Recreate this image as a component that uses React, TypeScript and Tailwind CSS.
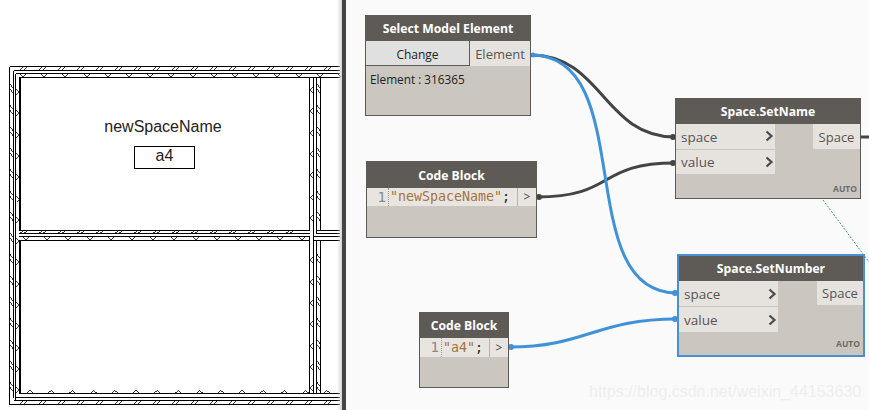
import React from "react";

function Plan() {
  const top: number[] = [];
  for (let x = 11; x < 340; x += 19) top.push(x);
  const vees: number[] = [];
  for (let x = 20; x < 340; x += 21.2) vees.push(x);
  const sideY: number[] = [];
  for (let y = 84; y < 395; y += 21.3) sideY.push(y);
  const hLines = [66.5, 70.5, 73.5, 77.5, 393.5, 397.5, 400.5, 404.5];
  const midH = [230.5, 233.5, 236.5, 240.5];
  const midV = [309.5, 313.5, 316.5, 320.5];
  return (
    <svg width="342" height="410" className="absolute left-0 top-0" shapeRendering="crispEdges">
      <g stroke="#000" strokeWidth="1" fill="none">
        {hLines.map((y, i) => (
          <line key={i} x1={i < 1 || i > 6 ? 9.5 : i === 1 || i === 6 ? 13.5 : i === 2 || i === 5 ? 15.5 : 19} x2="340" y1={y} y2={y} />
        ))}
        {midH.map((y, i) => (
          <React.Fragment key={i}>
            <line x1="19" x2="309.5" y1={y} y2={y} />
            <line x1={i < 2 ? 316.5 : 313.5} x2="340" y1={y} y2={y} />
          </React.Fragment>
        ))}
        <line x1="9.5" x2="9.5" y1="66.5" y2="404.5" />
        <line x1="13.5" x2="13.5" y1="70.5" y2="397.5" />
        <line x1="15.5" x2="15.5" y1="73.5" y2="400.5" />
        <line x1="20" x2="20" y1="77" y2="230" strokeWidth="2" />
        <line x1="20" x2="20" y1="240" y2="394" strokeWidth="2" />
        {midV.map((x, i) => (
          <React.Fragment key={i}>
            <line x1={x} x2={x} y1="77.5" y2={i === 0 ? 230.5 : i === 1 ? 236.5 : i === 2 ? 233.5 : 230.5} />
            <line x1={x} x2={x} y1={i < 2 ? 236.5 : 240.5} y2="393.5" />
          </React.Fragment>
        ))}
      </g>
      <g stroke="#000" strokeWidth="0.8" fill="none">
        {top.map((x) => (
          <React.Fragment key={x}>
            <path d={`M${x + 9} 70L${x + 12} 67M${x + 13} 70L${x + 16} 67`} />
            <path d={`M${x + 9} 404L${x + 12} 401M${x + 13} 404L${x + 16} 401`} />
            {x < 290 && <path d={`M${x + 9} 233L${x + 12} 231M${x + 13} 233L${x + 16} 231`} />}
          </React.Fragment>
        ))}
        {vees.map((x) => (
          <React.Fragment key={x}>
            <path d={`M${x} 74L${x + 3} 77L${x + 6} 74`} />
            {(x < 300 || x > 320) && <path d={`M${x + 3} 237L${x + 6} 240L${x + 9} 237`} />}
            <path d={`M${x + 7} 393L${x + 10} 390.5L${x + 13} 393`} />
          </React.Fragment>
        ))}
        {sideY.map((y) => (
          <React.Fragment key={y}>
            <path d={`M10 ${y}L13 ${y + 4}M10 ${y + 5}L13 ${y + 9}`} />
            <path d={`M16 ${y + 5}L19 ${y + 8}L16 ${y + 11}`} />
            {Math.abs(y - 232) > 14 && <path d={`M313 ${y + 3}L310 ${y + 6}L313 ${y + 9}`} />}
            {Math.abs(y - 232) > 14 && <path d={`M317 ${y}L320 ${y + 4}M317 ${y + 5}L320 ${y + 9}`} />}
          </React.Fragment>
        ))}
      </g>
    </svg>
  );
}

function Chevron() {
  return (
    <svg width="9" height="12" viewBox="0 0 9 12">
      <path d="M1.5 1.5L6.5 6L1.5 10.5" stroke="#4a4a4a" strokeWidth="2.2" fill="none" />
    </svg>
  );
}

const title = "bg-[#5e5b57] text-white text-[12.2px] font-bold flex items-center justify-center shrink-0 pt-[2px]";

function CodeBlock({ box, head, row, code }: { box: string; head: string; row: string; code: string }) {
  return (
    <div className={`absolute flex flex-col border border-[#5e5b57] bg-[#cbc7c0] ${box}`}>
      <div className={`${title} ${head}`}>Code Block</div>
      <div className={`flex bg-[#e8e5e0] ${row}`}>
        <div className="w-[22px] flex items-center justify-end pr-[2px] border-r border-dotted border-[#999] text-[#888] text-[14px] font-['DejaVu_Sans_Mono',monospace]">1</div>
        <div className="flex-1 flex items-center pl-[1px] text-[13.3px] text-[#a5733f] font-['DejaVu_Sans_Mono',monospace] whitespace-pre">
          {code}
          <span className="text-[#222]">;</span>
        </div>
        <div className="w-[19px] flex items-center justify-center border-l border-[#b5b2ac] text-[12px] text-[#444]">&gt;</div>
      </div>
    </div>
  );
}

function SpaceNode({ box, name, border, out, rows, auto }: { box: string; name: string; border: string; out: string; rows: string; auto: string }) {
  return (
    <div className={`absolute flex flex-col bg-[#cbc7c0] ${border} ${box}`}>
      <div className={`${title} h-[25px]`}>{name}</div>
      <div className="flex justify-between items-start">
        <div className={`w-[99px] flex flex-col gap-[1px] ${rows}`}>
          {["space", "value"].map((p) => (
            <div key={p} className="flex-1 flex items-center justify-between pl-[5px] pr-[1px] bg-[#e6e3de]">
              <span className="text-[13.5px] leading-none text-[#555] pt-[2px]">{p}</span>
              <Chevron />
            </div>
          ))}
        </div>
        <div className={`flex items-center justify-center bg-[#e6e3de] text-[13px] text-[#555] pt-[2px] ${out}`}>Space</div>
      </div>
      <div className={`absolute right-[3px] text-[8.5px] font-bold text-[#6f6c67] leading-none ${auto}`}>AUTO</div>
    </div>
  );
}

export default function App() {
  return (
    <div className="flex w-[869px] h-[410px] overflow-hidden font-['Open_Sans',sans-serif]">
      <div className="relative w-[342px] h-full bg-white overflow-hidden shrink-0">
        <Plan />
        <div className="absolute right-0 top-0 h-full w-[5px] bg-gradient-to-r from-white/0 to-[#d5d5d5]" />
        <div className="absolute left-[20px] top-[117px] w-[286px] text-center text-[16px] leading-5 text-[#222] font-['Liberation_Sans',sans-serif]">newSpaceName</div>
        <div className="absolute left-[134px] top-[146px] w-[61px] h-[23px] border border-black flex items-center justify-center pb-[3px] text-[16px] text-[#222] font-['Liberation_Sans',sans-serif]">a4</div>
      </div>
      <div className="w-[4px] h-full bg-[#444] shrink-0" />
      <div className="relative flex-1 h-full bg-[#fafafa] overflow-hidden">
        <svg width="523" height="410" className="absolute left-0 top-0" fill="none">
          <path d="M185 55C256 55 258 137 329 137" stroke="#444" strokeWidth="3" />
          <path d="M191 197C270 197 250 163 329 163" stroke="#444" strokeWidth="3" />
          <path d="M185 55C294 55 224 293 331 293" stroke="#3f92d8" strokeWidth="3" />
          <path d="M163 347C240 347 250 319 331 319" stroke="#3f92d8" strokeWidth="3" />
          <path d="M477 200L523 262" stroke="#0c8a2c" strokeWidth="0.8" strokeDasharray="2 1.5" />
          <circle cx="187" cy="55" r="2.5" fill="#3f92d8" />
          <circle cx="165" cy="347" r="3" fill="#3f92d8" />
          <circle cx="327" cy="137" r="3" fill="#444" />
          <circle cx="327" cy="163" r="3" fill="#444" />
          <circle cx="193" cy="197" r="3" fill="#444" />
          <circle cx="329" cy="293" r="3" fill="#3f92d8" />
          <circle cx="329" cy="319" r="3" fill="#3f92d8" />
          <path d="M515 137h8" stroke="#444" strokeWidth="3" />
        </svg>

        <div className="absolute left-[19px] top-[15px] w-[166px] h-[101px] flex flex-col border border-[#5e5b57] bg-[#cbc7c0]">
          <div className={`${title} h-[25px]`}>Select Model Element</div>
          <div className="flex h-[25px]">
            <div className="w-[104px] flex items-center justify-center bg-[#e0e0e0] border-b border-r border-[#5e5b57] pt-[3px] text-[12px] text-[#222]">Change</div>
            <div className="flex-1 flex items-center justify-center bg-[#e6e3de] pt-[2px] text-[13px] text-[#555]">Element</div>
          </div>
          <div className="pl-[4px] pt-[5px] text-[11.8px] leading-4 text-[#222]">Element : 316365</div>
        </div>

        <CodeBlock box="left-[20px] top-[161px] w-[171px] h-[77px]" head="h-[26px]" row="h-[18px]" code={'"newSpaceName"'} />
        <CodeBlock box="left-[73px] top-[312px] w-[90px] h-[76px]" head="h-[25px]" row="h-[19px]" code={'"a4"'} />

        <SpaceNode box="left-[329px] top-[98px] w-[186px] h-[101px]" border="border border-[#5e5b57]" out="w-[47px] h-[25px]" rows="h-[50px]" auto="bottom-[5px]" name="Space.SetName" />
        <SpaceNode box="left-[331px] top-[254px] w-[188px] h-[103px]" border="border-2 border-[#4a90d0]" out="w-[46px] h-[24px]" rows="h-[51px]" auto="bottom-[7px]" name="Space.SetNumber" />

        <div className="absolute left-[243px] top-[382px] text-[16px] leading-5 text-[#eeeeee] font-['Liberation_Sans',sans-serif] whitespace-nowrap">https://blog.csdn.net/weixin_44153630</div>
      </div>
    </div>
  );
}
